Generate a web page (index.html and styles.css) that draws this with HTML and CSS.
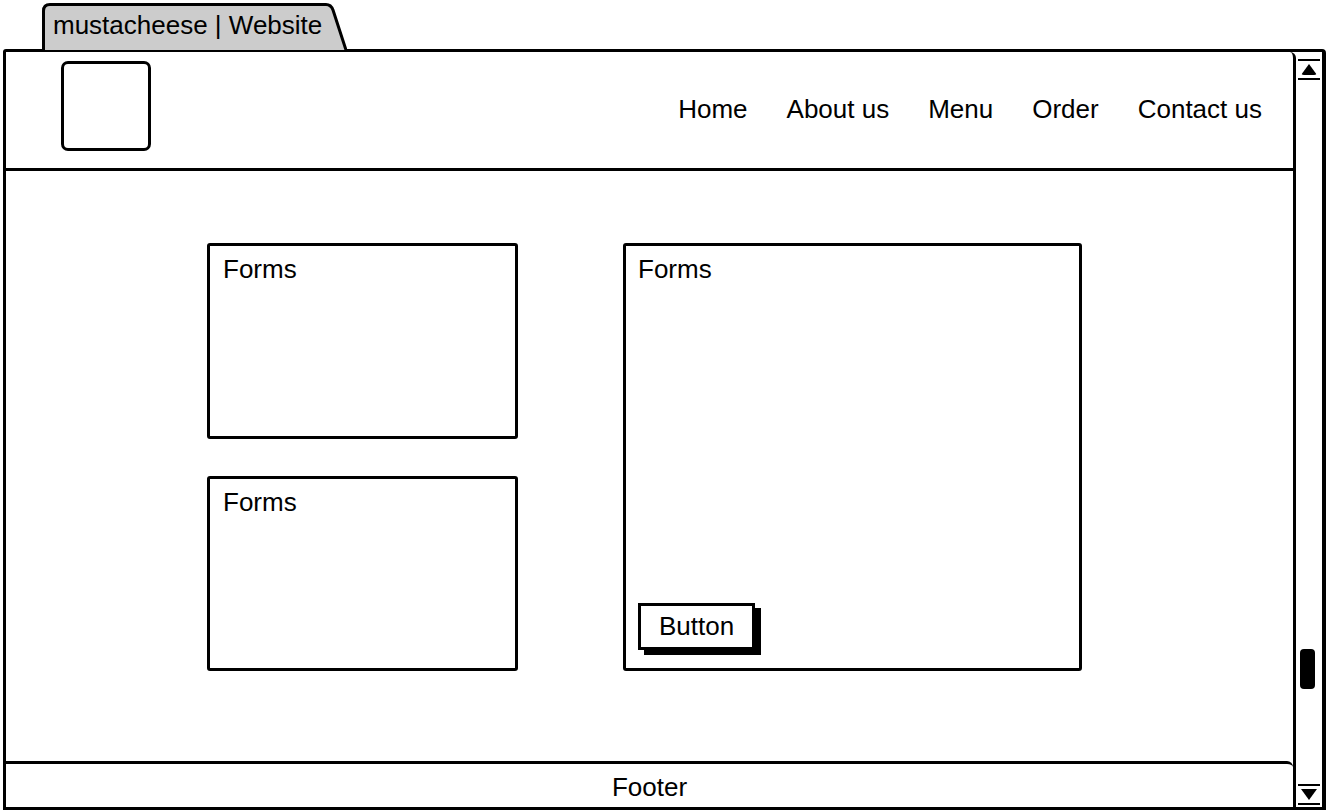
FILE: index.html
```html
<!DOCTYPE html>
<html>
<head>
    <title>mustacheese | Website</title>
    <link rel="stylesheet" href="styles.css">
</head>
<body>
    <div class="tab">
        <svg class="tab-shape" width="305" height="47" viewBox="0 0 305 47">
            <path d="M1.5 47 V8 Q1.5 1.5 8 1.5 H284 Q289 1.5 291 7 L304 47" fill="#cccccc" stroke="#000" stroke-width="3"/>
        </svg>
        <span class="tab-title">mustacheese | Website</span>
    </div>

    <div class="window">
        <div class="page">
            <header class="header">
                <div class="logo"></div>
                <nav class="nav">
                    <a href="#">Home</a>
                    <a href="#">About us</a>
                    <a href="#">Menu</a>
                    <a href="#">Order</a>
                    <a href="#">Contact us</a>
                </nav>
            </header>

            <main class="main">
                <div class="forms">
                    <div class="box box-small">Forms</div>
                    <div class="box box-small">Forms</div>
                    <div class="box box-large">
                        <span>Forms</span>
                        <button class="btn">Button</button>
                    </div>
                </div>
            </main>

            <footer class="footer">Footer</footer>
        </div>

        <!-- scrollbar -->
        <div class="scrollbar">
            <div class="arrow arrow-up"><span></span></div>
            <div class="track"><div class="thumb"></div></div>
            <div class="arrow arrow-down"><span></span></div>
        </div>
    </div>
</body>
</html>
```

FILE: styles.css
```css
/* base */
* {
    box-sizing: border-box;
}

body {
    margin: 0;
    padding-top: 3px;
    background: #fff;
    color: #000;
    font-family: "Liberation Sans", Arial, sans-serif;
    font-size: 26px;
    line-height: 30px;
}

/* browser tab */
.tab {
    position: relative;
    width: 305px;
    height: 46px;
    margin-left: 42px;
    padding: 7px 0 0 11px;
}

.tab-shape {
    position: absolute;
    left: 0;
    top: 0;
}

.tab-title {
    position: relative;
}

/* window frame */
.window {
    display: flex;
    width: 1323px;
    height: 761px;
    margin-left: 3px;
    border: 3px solid #000;
    border-right-width: 4px;
    border-radius: 3px 4px 0 0;
}

.page {
    flex: 1;
    display: flex;
    flex-direction: column;
    border-right: 3px solid #000;
    border-radius: 0 6px 0 0;
}

/* header */
.header {
    height: 119px;
    display: flex;
    justify-content: space-between;
    align-items: flex-start;
    padding: 9px 31px 0 55px;
    border-bottom: 3px solid #000;
}

.logo {
    width: 90px;
    height: 90px;
    border: 3px solid #000;
    border-radius: 7px;
}

.nav {
    align-self: center;
    display: flex;
    gap: 39px;
    margin-top: -12px;
}

.nav a {
    color: #000;
    text-decoration: none;
}

/* content */
.main {
    flex: 1;
    padding: 72px 0 0 201px;
}

.forms {
    display: grid;
    grid-template-columns: 311px 459px;
    grid-template-rows: 196px 195px;
    column-gap: 105px;
    row-gap: 37px;
}

.box {
    border: 3px solid #000;
    border-radius: 3px;
    padding: 8px 13px;
}

.box-large {
    grid-column: 2;
    grid-row: 1 / 3;
    display: flex;
    flex-direction: column;
    align-items: flex-start;
    padding: 8px 13px 18px 12px;
}

.btn {
    margin-top: auto;
    padding: 5px 18px;
    border: 3px solid #000;
    background: #fff;
    font: inherit;
    line-height: 31px;
    color: #000;
    box-shadow: 6px 5px 0 #000;
}

/* footer */
.footer {
    height: 46px;
    padding-top: 8px;
    border-top: 3px solid #000;
    border-radius: 0 6px 0 0;
    text-align: center;
}

/* scrollbar */
.scrollbar {
    width: 26px;
    display: flex;
    flex-direction: column;
    padding: 7px 2px 2px 2px;
}

.arrow {
    height: 21px;
    display: flex;
    align-items: center;
    justify-content: center;
    border-top: 2px solid #000;
    border-bottom: 2px solid #000;
}

.arrow span {
    width: 0;
    height: 0;
    border-left: 8px solid transparent;
    border-right: 8px solid transparent;
}

.arrow-up span {
    border-bottom: 11px solid #000;
    border-radius: 3px;
}

.arrow-down span {
    border-top: 11px solid #000;
}

.track {
    flex: 1;
    display: flex;
    flex-direction: column;
    justify-content: flex-end;
    padding-bottom: 95px;
}

.thumb {
    width: 15px;
    height: 40px;
    margin-left: 2px;
    background: #000;
    border-radius: 4px;
}
```
